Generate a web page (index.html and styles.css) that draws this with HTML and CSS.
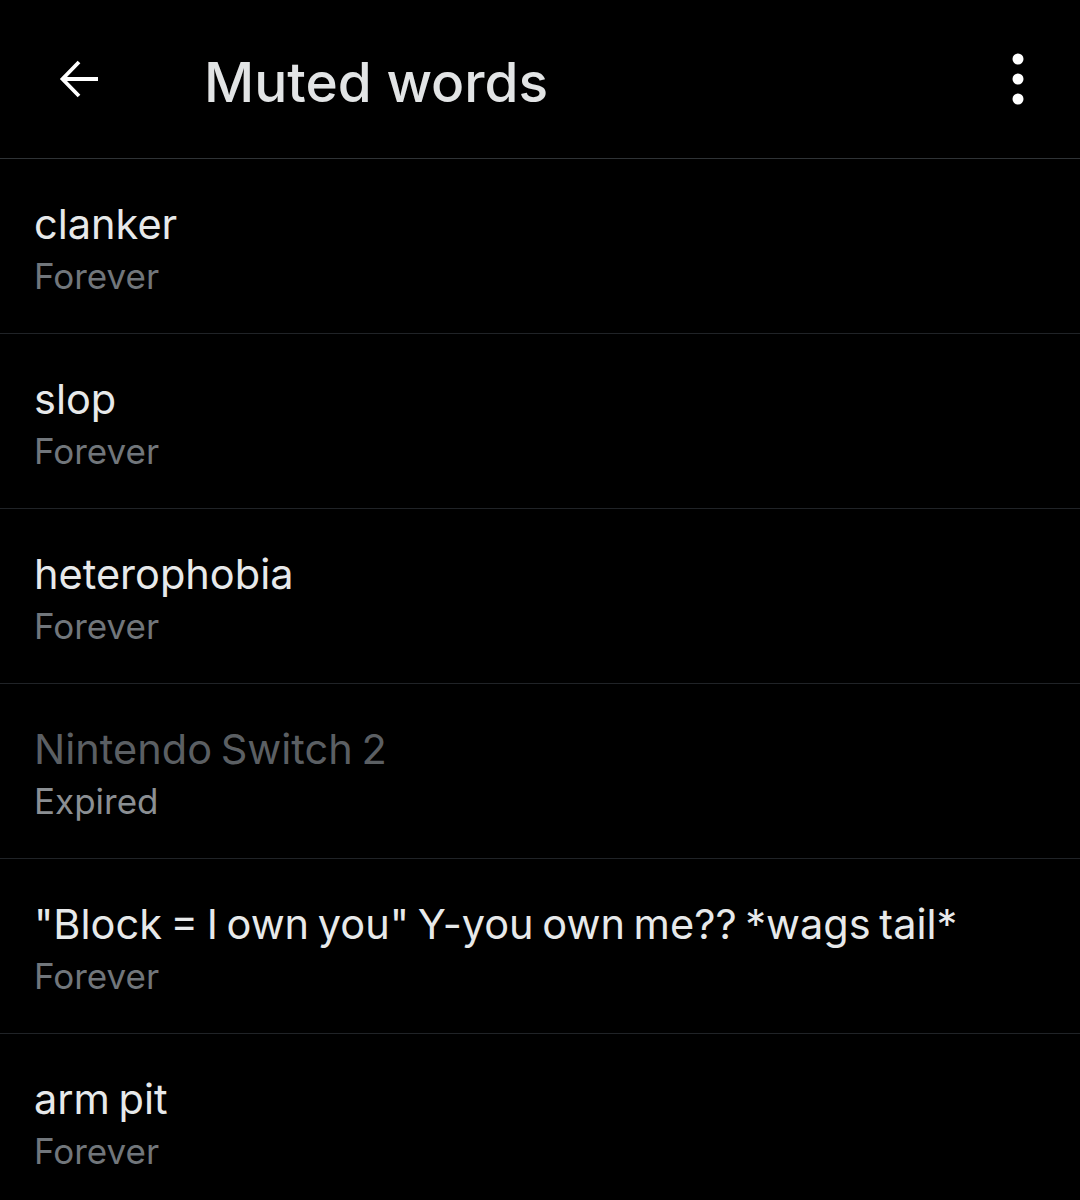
FILE: index.html
```html
<!DOCTYPE html>
<html>
<head>
<meta charset="utf-8">
<link rel="stylesheet" href="styles.css">
</head>
<body>
<header class="topbar">
  <div class="back">
    <svg width="44" height="44" viewBox="0 0 44 44"><path d="M41 22H6M22 5L5.5 22 22 39" fill="none" stroke="#fff" stroke-width="3.8"/></svg>
  </div>
  <h1 class="title">Muted words</h1>
  <div class="more">
    <svg width="20" height="56" viewBox="0 0 20 56"><circle cx="10" cy="8" r="5.5" fill="#fff"/><circle cx="10" cy="28" r="5.5" fill="#fff"/><circle cx="10" cy="48" r="5.5" fill="#fff"/></svg>
  </div>
</header>
<ul class="list">
  <li class="row"><div class="word">clanker</div><div class="dur">Forever</div></li>
  <li class="row"><div class="word">slop</div><div class="dur">Forever</div></li>
  <li class="row"><div class="word">heterophobia</div><div class="dur">Forever</div></li>
  <li class="row expired"><div class="word">Nintendo Switch 2</div><div class="dur">Expired</div></li>
  <li class="row"><div class="word">"Block = I own you" Y-you own me?? *wags tail*</div><div class="dur">Forever</div></li>
  <li class="row"><div class="word">arm pit</div><div class="dur">Forever</div></li>
</ul>
</body>
</html>
```
FILE: styles.css
```css
html, body { margin: 0; padding: 0; background: #000; }
body { font-family: Inter, "Noto Sans", sans-serif; color: #e7e9ea; width: 1080px; height: 1200px; overflow: hidden; }
.topbar { height: 159px; display: flex; align-items: center; border-bottom: 1px solid #2f3336; box-sizing: border-box; }
.back { width: 44px; height: 44px; margin-left: 57px; }
.back svg { display: block; }
.title { margin: 6px 0 0 103px; font-size: 55px; font-weight: 500; color: #e2e4e5; flex: 1; }
.more { margin-right: 52px; }
.more svg { display: block; }
.list { list-style: none; margin: 0; padding: 0; }
.row { height: 175px; box-sizing: border-box; border-bottom: 1px solid #202327; padding: 40px 35px 0 34px; }
.word { font-size: 41.5px; line-height: 50px; word-spacing: -3px; color: #e7e9ea; white-space: nowrap; }
.dur { font-size: 35px; line-height: 54px; color: #71767b; }
.expired .word { color: #5b5f63; }
.expired .dur { color: #8b8f93; }
```
